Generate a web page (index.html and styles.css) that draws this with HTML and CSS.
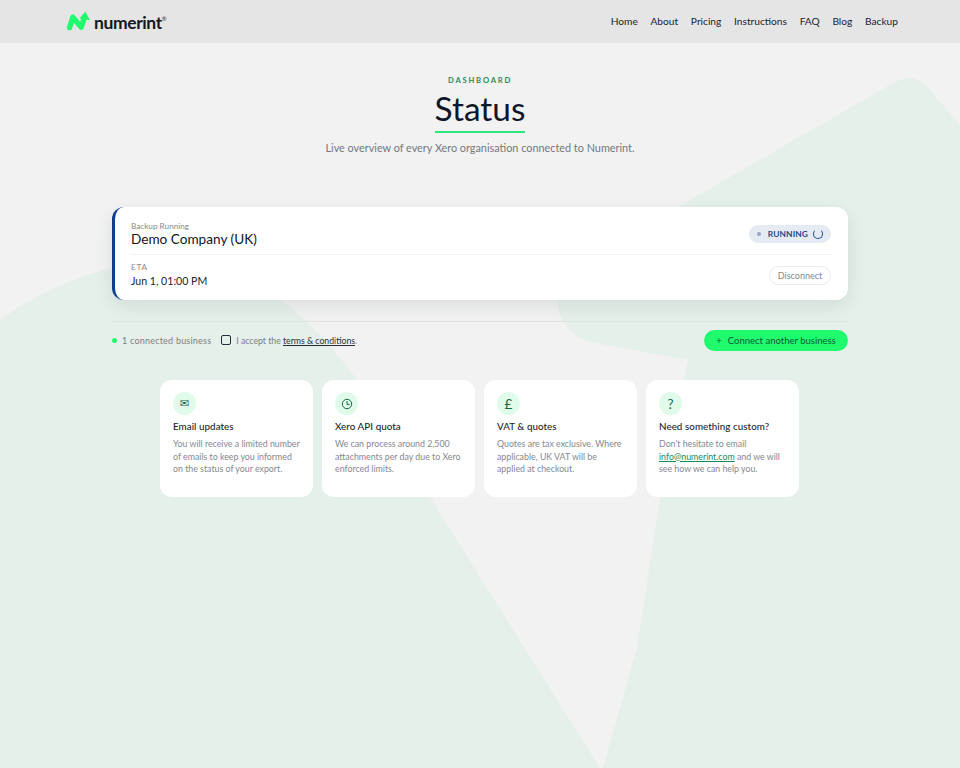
FILE: index.html
```html
<!DOCTYPE html>
<html lang="en">
<head>
<meta charset="utf-8">
<title>Status</title>
<link rel="stylesheet" href="styles.css">
</head>
<body>
<svg class="bg-shape" viewBox="0 0 960 768" aria-hidden="true">
  <path d="M0 320 C45 287 90 272 135 263 C175 255 205 253 235 270 C255 280 270 289 283 301 C310 322 335 351 353 374 L430 497 L480 577 L600 768 L0 768 Z"/>
  <path d="M603 768 L637 647 L660 498 L688 360 L590 342 C570 336 560 322 557 301 C556 285 560 262 590 245 L683 204 L895 82 C908 76 918 76 930 90 L960 125 L960 768 Z"/>
</svg>
<header class="topbar">
  <a class="logo" href="#">
    <svg class="logo-mark" viewBox="0 0 26 20" aria-hidden="true">
      <path d="M3.6 16.6 L6.8 6.2 L15.2 16.2 L18.6 6" class="logo-stroke"/>
      <path d="M13.4 7.6 L19.4 0.4 L24 9.2 Z" class="logo-head"/>
    </svg>
    <span class="logo-text">numerint</span><sup class="logo-reg">®</sup>
  </a>
  <nav class="nav">
    <a href="#">Home</a><a href="#">About</a><a href="#">Pricing</a><a href="#">Instructions</a><a href="#">FAQ</a><a href="#">Blog</a><a href="#">Backup</a>
  </nav>
</header>
<main class="page">
  <section class="hero">
    <div class="eyebrow">DASHBOARD</div>
    <h1 class="title">Status</h1>
    <p class="lead">Live overview of every Xero organisation connected to Numerint.</p>
  </section>
  <section class="status-card">
    <div class="status-row status-row-top">
      <div>
        <div class="label">Backup Running</div>
        <div class="company">Demo Company (UK)</div>
      </div>
      <div class="badge"><span class="badge-dot"></span>RUNNING<span class="spinner"></span></div>
    </div>
    <div class="status-row status-row-bottom">
      <div>
        <div class="label label-caps">ETA</div>
        <div class="eta">Jun 1, 01:00 PM</div>
      </div>
      <button class="ghost-btn" type="button">Disconnect</button>
    </div>
  </section>
  <section class="actions">
    <div class="actions-left">
      <span class="green-dot"></span>
      <span class="count">1 connected business</span>
      <label class="accept"><span class="checkbox"></span>I accept the <a href="#">terms &amp; conditions</a>.</label>
    </div>
    <button class="primary-btn" type="button"><span class="plus">+</span>Connect another business</button>
  </section>
  <section class="features">
    <article class="feature">
      <div class="icon icon-mail">✉</div>
      <h2>Email updates</h2>
      <p>You will receive a limited number of emails to keep you informed on the status of your export.</p>
    </article>
    <article class="feature">
      <div class="icon"><svg viewBox="0 0 12 12" class="icon-svg" aria-hidden="true"><circle cx="6" cy="6" r="4.7"/><path d="M6 3 V6.3 H8.6"/></svg></div>
      <h2>Xero API quota</h2>
      <p>We can process around 2,500 attachments per day due to Xero enforced limits.</p>
    </article>
    <article class="feature">
      <div class="icon icon-glyph">£</div>
      <h2>VAT &amp; quotes</h2>
      <p>Quotes are tax exclusive. Where applicable, UK VAT will be applied at checkout.</p>
    </article>
    <article class="feature">
      <div class="icon icon-glyph">?</div>
      <h2>Need something custom?</h2>
      <p>Don't hesitate to email <a href="#">info@numerint.com</a> and we will see how we can help you.</p>
    </article>
  </section>
</main>
</body>
</html>
```
FILE: styles.css
```css
* { box-sizing: border-box; }
html, body { margin: 0; padding: 0; }
body {
  position: relative;
  height: 768px;
  overflow: hidden;
  background: #f2f2f2;
  color: #10162a;
  font-family: Lato, "Noto Sans", sans-serif;
}
a { color: inherit; text-decoration: none; }
.bg-shape { position: absolute; inset: 0; width: 960px; height: 768px; fill: #e6f0ea; }
.topbar {
  position: relative;
  height: 43px;
  background: #e5e5e5;
  display: flex;
  align-items: center;
  justify-content: space-between;
  padding: 0 62px 0 66px;
}
.logo { display: flex; align-items: center; }
.logo-mark { width: 26px; height: 20px; margin-right: 2px; margin-top: -2px; }
.logo-stroke { fill: none; stroke: #1ffb6d; stroke-width: 5.4; stroke-linejoin: round; stroke-linecap: round; }
.logo-head { fill: #1ffb6d; }
.logo-text { font-size: 17.5px; font-weight: 700; letter-spacing: -.4px; color: #14171f; margin-top: 1px; }
.logo-reg { font-size: 6px; align-self: flex-start; margin-top: 4px; color: #333; }
.nav { display: flex; gap: 12.7px; font-size: 10.2px; color: #1a1f2e; margin-top: -1px; }
.page { position: relative; width: 736px; margin: 0 auto; }
.hero { text-align: center; padding-top: 32px; }
.eyebrow { font-size: 7.6px; font-weight: 700; letter-spacing: 1.8px; color: #1f8a5e; line-height: 10px; }
.title {
  display: inline-block;
  margin: 3px 0 0;
  padding-bottom: 2px;
  font-size: 33.4px;
  font-weight: 400;
  line-height: 41px;
  color: #10162a;
  border-bottom: 2px solid #2ee87f;
}
.lead { margin: 7px 0 0; font-size: 10.85px; line-height: 16px; color: #74777f; }
.status-card {
  margin-top: 51px;
  height: 93px;
  background: #fff;
  border-left: 3px solid #0d3f8f;
  border-radius: 12px;
  box-shadow: 0 6px 18px rgba(20, 50, 40, .1);
  padding: 0 17px 0 16px;
}
.status-row { display: flex; justify-content: space-between; align-items: center; }
.status-row-top { height: 48px; border-bottom: 1px solid #f3f3f3; padding-top: 8px; }
.status-row-bottom { height: 45px; padding-bottom: 5px; }
.label { font-size: 8.2px; line-height: 11px; color: #85888f; }
.label-caps { letter-spacing: .8px; }
.company { font-size: 13.6px; line-height: 17px; margin-top: -1px; color: #10162a; }
.eta { font-size: 10.6px; line-height: 15px; margin-top: 1px; color: #1a1f2e; }
.badge {
  display: flex;
  align-items: center;
  height: 18px;
  padding: 0 8px;
  background: #e5eaf3;
  border-radius: 9px;
  font-size: 8.4px;
  font-weight: 700;
  letter-spacing: .1px;
  color: #1c4a8e;
  margin-top: -2px;
}
.badge-dot { width: 4px; height: 4px; border-radius: 50%; background: #8ea6cb; margin-right: 7px; }
.spinner {
  width: 10px;
  height: 10px;
  margin-left: 5px;
  border: 1.7px solid #1c4a8e;
  border-top-color: transparent;
  border-radius: 50%;
}
.ghost-btn {
  height: 19px;
  width: 62px;
  padding: 0;
  background: #fff;
  border: 1px solid #ececec;
  border-radius: 10px;
  font: 9px Lato, sans-serif;
  color: #85888f;
}
.actions {
  margin-top: 21px;
  border-top: 1px solid #dfe4e1;
  padding-top: 8px;
  display: flex;
  justify-content: space-between;
  align-items: center;
}
.actions-left { display: flex; align-items: center; font-size: 9px; color: #7b7e85; margin-top: -1px; }
.green-dot { width: 5px; height: 5px; border-radius: 50%; background: #1ffb6d; margin-right: 5px; }
.count { letter-spacing: .22px; margin-right: 10px; }
.accept { display: flex; align-items: center; white-space: pre-wrap; font-size: 8.7px; }
.accept a { color: #2b2f3a; text-decoration: underline; }
.checkbox { width: 10px; height: 10px; border: 1px solid #2b2f3a; border-radius: 2px; margin-right: 5px; background: transparent; }
.primary-btn {
  height: 21px;
  width: 144px;
  padding: 0;
  background: #1ffb6d;
  border: 0;
  border-radius: 11px;
  font: 9.5px Lato, sans-serif;
  color: #0b5a3a;
}
.plus { margin-right: 6px; }
.features {
  margin: 29px 48px 0;
  display: grid;
  grid-template-columns: repeat(4, 153px);
  gap: 9px;
}
.feature {
  height: 117px;
  background: #fff;
  border-radius: 12px;
  padding: 12px 11px 12px 13px;
}
.icon {
  width: 23px;
  height: 23px;
  border-radius: 50%;
  background: #e0fbea;
  display: flex;
  align-items: center;
  justify-content: center;
  color: #0f6b48;
}
.icon-mail { font: 11px "DejaVu Sans", sans-serif; }
.icon-glyph { font-size: 13.5px; }
.icon-svg { width: 12px; height: 12px; fill: none; stroke: #0f6b48; stroke-width: 1; }
.feature h2 { margin: 4px 0 0; font-size: 9.8px; line-height: 14px; font-weight: 500; letter-spacing: .05px; color: #1a1f2e; }
.feature p { margin: 5px 0 0; font-size: 8.8px; line-height: 12.5px; color: #85888f; }
.feature p a { color: #178a5c; text-decoration: underline; }
```
